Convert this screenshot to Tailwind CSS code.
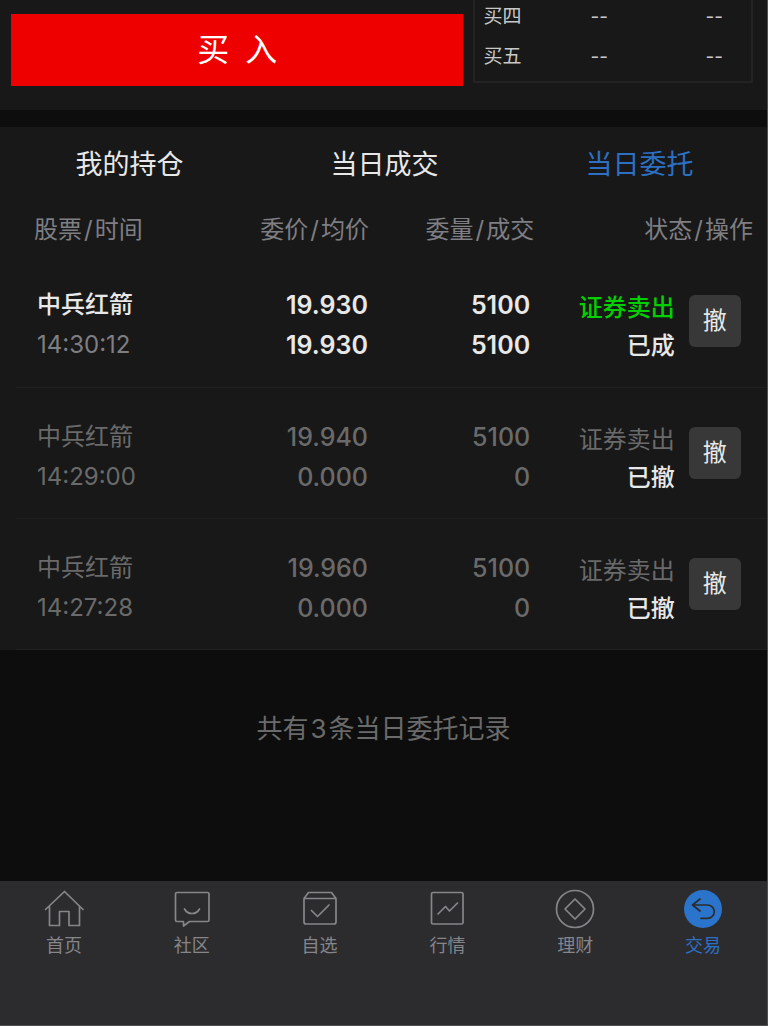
<!DOCTYPE html>
<html lang="zh-CN">
<head>
  <meta charset="UTF-8" />
  <meta name="viewport" content="width=device-width, initial-scale=1.0" />
  <title>当日委托</title>
  <script src="https://cdn.jsdelivr.net/npm/@tailwindcss/browser@4"></script>
</head>
<body class="bg-[#0d0d0d] font-['Inter','Noto_Sans_CJK_SC',sans-serif] text-[#e8e8e8]">
  <div class="min-h-screen flex flex-col border-r border-b border-[#505052]">

    <!-- order form + bid levels -->
    <section class="grid grid-cols-[453fr_280fr] items-start gap-2.5 bg-[#181818] pl-[11px] pr-3.5 pb-6">
      <button class="mt-3.5 h-[72px] bg-[#ee0000] text-white text-[32px]">买&ensp;入</button>
      <div class="border-2 border-t-0 border-[#232323] pb-px pl-2 pr-7">
        <table class="w-full table-fixed text-[19px] leading-[22px] text-[#c8c8c8]">
          <tbody id="levels"></tbody>
        </table>
      </div>
    </section>

    <section class="mt-[17px] bg-[#181818]">
      <div class="grid grid-cols-3 h-[76px] text-[27px] pl-0.5">
        <button>我的持仓</button>
        <button>当日成交</button>
        <button class="text-[#2c70c3]">当日委托</button>
      </div>

      <div class="pl-4">
        <table class="w-full table-fixed text-2xl">
          <colgroup>
            <col class="w-[27%]" />
            <col class="w-[20%]" />
            <col class="w-[22%]" />
            <col class="w-[19%]" />
            <col class="w-[12%]" />
          </colgroup>
          <thead>
            <tr class="h-[53px] text-[#7e7e83] text-right">
              <th class="font-normal text-left pl-[18px]">股票<span class="px-0.5">/</span>时间</th>
              <th class="font-normal">委价<span class="px-0.5">/</span>均价</th>
              <th class="font-normal">委量<span class="px-0.5">/</span>成交</th>
              <th class="font-normal pr-3.5" colspan="2">状态<span class="px-0.5">/</span>操作</th>
            </tr>
          </thead>
          <tbody id="orders"></tbody>
        </table>
      </div>
    </section>

    <p class="pt-[59px] text-center text-[26px] leading-10 text-[#6a6a6a]">共有<span class="px-0.5">3</span>条当日委托记录</p>

    <nav class="mt-auto grid grid-cols-6 h-36 bg-[#2c2c2e] pt-2 text-lg leading-[26px] text-[#85858a]">
      <a href="#" class="flex flex-col items-center gap-1">
        <svg class="size-10" viewBox="0 0 40 40" fill="none" stroke="currentColor" stroke-width="1.7" stroke-linejoin="round" stroke-linecap="round">
          <path d="M1.5 20.5 20.5 2.5 39 20.5M5.5 17.5V36.5H15.5V22.5H25V36.5H35.5V17.5" />
        </svg>
        首页
      </a>
      <a href="#" class="flex flex-col items-center gap-1">
        <svg class="size-10" viewBox="0 0 40 40" fill="none" stroke="currentColor" stroke-width="1.7" stroke-linejoin="round" stroke-linecap="round">
          <path d="M5 3.5H35.5Q37 3.5 37 5V31Q37 32.5 35.5 32.5H17.5L11.5 37V32.5H5Q3.5 32.5 3.5 31V5Q3.5 3.5 5 3.5Z" />
          <path d="M12.500 20Q15 24.500 20 24.500T27.500 20" />
        </svg>
        社区
      </a>
      <a href="#" class="flex flex-col items-center gap-1">
        <svg class="size-10" viewBox="0 0 40 40" fill="none" stroke="currentColor" stroke-width="1.7" stroke-linejoin="round" stroke-linecap="round">
          <path d="M4 9.5 8.5 3.5H31.5L36 9.5V33Q36 35 34 35H6Q4 35 4 33ZM4 9.5H36" />
          <path d="M11.5 21.5 17.5 27.5 29 16" />
        </svg>
        自选
      </a>
      <a href="#" class="flex flex-col items-center gap-1">
        <svg class="size-10" viewBox="0 0 40 40" fill="none" stroke="currentColor" stroke-width="1.7" stroke-linejoin="round" stroke-linecap="round">
          <rect x="4.5" y="3.5" width="31.5" height="31.5" rx="1.5" />
          <path d="M11 25 18.5 17.5 22.5 22 30.5 14" />
        </svg>
        行情
      </a>
      <a href="#" class="flex flex-col items-center gap-1">
        <svg class="size-10" viewBox="0 0 40 40" fill="none" stroke="currentColor" stroke-width="1.7" stroke-linejoin="round">
          <circle cx="20" cy="20" r="18.5" />
          <path d="M20 10 30 20 20 30 10 20Z" />
        </svg>
        理财
      </a>
      <a href="#" class="flex flex-col items-center gap-1 text-[#2c70c3]">
        <svg class="size-10" viewBox="0 0 40 40" fill="none" stroke="#2c2c2e" stroke-width="1.7" stroke-linejoin="round" stroke-linecap="round">
          <circle cx="20" cy="20" r="19" fill="#2b74cb" stroke="none" />
          <path d="M17 10 9.5 16 17 22M9.5 16H24.5A6.7 6.7 0 0 1 24.5 29.4H18" />
        </svg>
        交易
      </a>
    </nav>
  </div>

  <script>
    const levels = ["买四", "买五"];

    const orders = [
      { name: "中兵红箭", time: "14:30:12", price: "19.930", avg: "19.930", qty: "5100", filled: "5100", status: "已成", done: true },
      { name: "中兵红箭", time: "14:29:00", price: "19.940", avg: "0.000", qty: "5100", filled: "0", status: "已撤", done: false },
      { name: "中兵红箭", time: "14:27:28", price: "19.960", avg: "0.000", qty: "5100", filled: "0", status: "已撤", done: false }
    ];

    document.getElementById("levels").innerHTML = levels.map(l => `
      <tr class="h-10 align-top">
        <td class="pt-1.5">${l}</td>
        <td class="pt-1.5 pr-2 text-center">--</td>
        <td class="pt-1.5 text-right">--</td>
      </tr>`).join("");

    document.getElementById("orders").innerHTML = orders.map(o => `
      <tr class="h-[131px] border-b border-[#202020] leading-10 text-right ${o.done ? "font-semibold" : "font-medium text-[#6a6a6a]"}">
        <td class="pt-2 pl-[21px] text-left">
          <div class="${o.done ? "font-medium" : "font-normal"}">${o.name}</div>
          <div class="font-normal ${o.done ? "text-[#7e7e83]" : ""}">${o.time}</div>
        </td>
        <td class="pt-2 pr-px text-[25px]">${o.price}<br />${o.avg}</td>
        <td class="pt-2 pr-1 text-[25px]">${o.qty}<br />${o.filled}</td>
        <td class="pt-3 pr-0.5 leading-[38px]">
          <div class="${o.done ? "font-medium text-[#00d000]" : "font-normal"}">证券卖出</div>
          <div class="font-medium text-[#e8e8e8]">${o.status}</div>
        </td>
        <td class="pl-3 text-left">
          <button class="block size-[52px] rounded-md bg-[#383838] font-normal text-[#e8e8e8]">撤</button>
        </td>
      </tr>`).join("");
  </script>
</body>
</html>
